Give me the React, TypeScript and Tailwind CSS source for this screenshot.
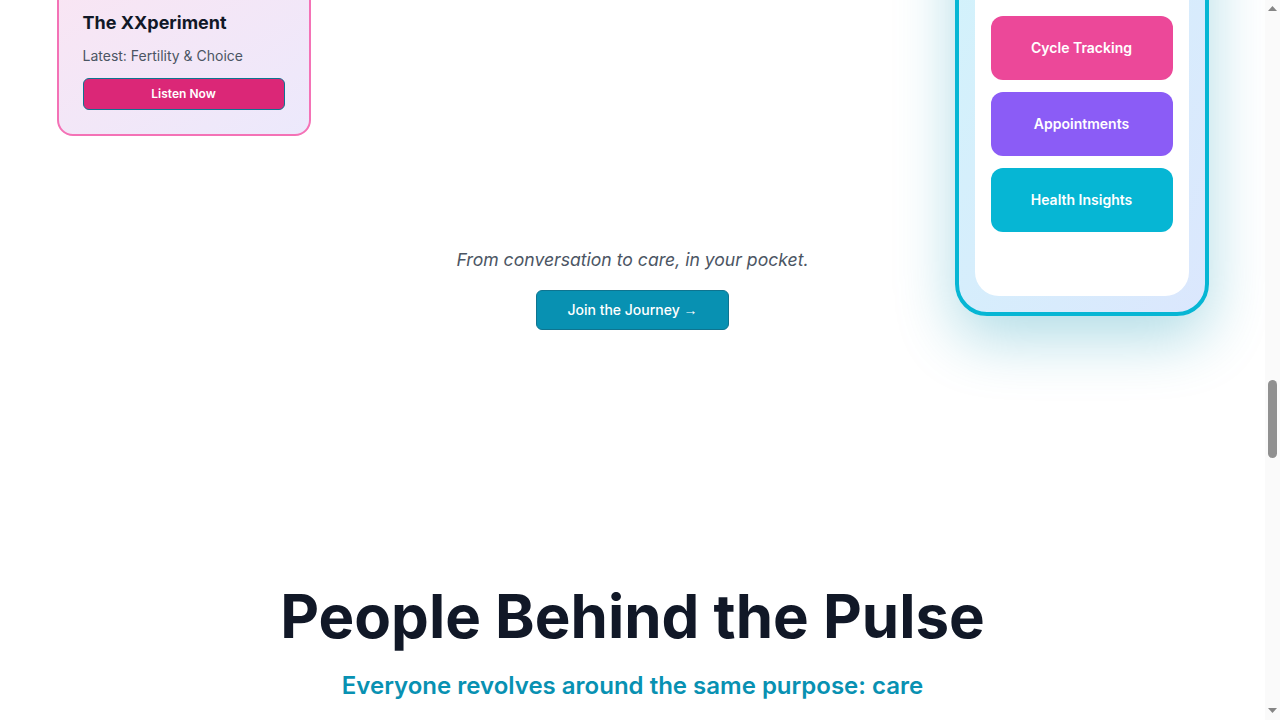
import { useLayoutEffect, useRef, useState } from "react";

const services = [
  { title: "Cycle Care", text: "Personal guidance for every phase of your cycle, from first period to menopause." },
  { title: "Fertility Support", text: "Honest answers, gentle planning tools and clinicians who listen." },
  { title: "Mental Wellbeing", text: "Hormones and mood are connected. Our care treats them together." },
  { title: "Sexual Health", text: "Private, judgement-free consultations and same-week testing." },
  { title: "Pregnancy Journey", text: "Week-by-week check-ins with midwives and doctors on call." },
  { title: "Community", text: "Circles, events and stories from people who have been there." },
];

const team = [
  { name: "Dr. Amara Okafor", role: "Founder & Gynecologist", initials: "AO", tone: "bg-[#ec4899]" },
  { name: "Lena Fischer", role: "Head of Product", initials: "LF", tone: "bg-[#8b5cf6]" },
  { name: "Priya Raman", role: "Lead Midwife", initials: "PR", tone: "bg-[#06b6d4]" },
  { name: "Sofia Marquez", role: "Podcast Host", initials: "SM", tone: "bg-[#db2777]" },
  { name: "Dr. Hana Sato", role: "Endocrinologist", initials: "HS", tone: "bg-[#0891b2]" },
  { name: "Maya Brooks", role: "Community Lead", initials: "MB", tone: "bg-[#7c3aed]" },
];

function PodcastCard() {
  return (
    <div className="w-[254px] shrink-0 rounded-2xl border-2 border-[#f472b6] bg-linear-to-br from-[#f9e5f3] to-[#ece9fc] px-6 pt-[25px] pb-6">
      <h3 className="text-lg leading-7 font-bold text-[#111827]">The XXperiment</h3>
      <p className="mt-[9px] text-sm text-[#4b5563]">Latest: Fertility &amp; Choice</p>
      <button className="mt-3 w-full rounded-md border border-[#0e7490] bg-[#db2777] py-[5px] text-xs leading-5 font-semibold text-white">
        Listen Now
      </button>
    </div>
  );
}

function Phone({ phoneRef }: { phoneRef: React.RefObject<HTMLDivElement | null> }) {
  return (
    <div
      ref={phoneRef}
      className="flex h-[514px] w-[254px] shrink-0 flex-col rounded-[2rem] border-4 border-[#06b6d4] bg-linear-to-br from-[#d1f4fb] to-[#dbe7fd] p-4 shadow-[0_22px_60px_rgba(8,145,178,0.32)]"
    >
      <div className="flex flex-1 flex-col rounded-3xl bg-white px-4 pb-16">
        <div className="flex items-center justify-between pt-4 text-xs font-semibold text-[#111827]">
          <span>9:41</span>
          <span className="h-2 w-6 rounded-full bg-[#111827]" />
        </div>
        <div className="mt-6 text-center">
          <p className="text-lg font-bold text-[#0891b2]">Pulse</p>
          <p className="text-sm text-[#4b5563]">Hi Maya, day 12</p>
        </div>
        <div className="mt-auto flex flex-col gap-3">
          <div className="flex h-16 items-center justify-center rounded-xl bg-[#ec4899] text-sm font-semibold text-white">
            Cycle Tracking
          </div>
          <div className="flex h-16 items-center justify-center rounded-xl bg-[#8b5cf6] text-sm font-semibold text-white">
            Appointments
          </div>
          <div className="flex h-16 items-center justify-center rounded-xl bg-[#06b6d4] text-sm font-semibold text-white">
            Health Insights
          </div>
        </div>
      </div>
    </div>
  );
}

function Scrollbar({ top, height }: { top: number; height: number }) {
  return (
    <aside className="flex h-screen w-[15px] shrink-0 flex-col bg-[#fafafa]">
      <div className="flex h-[15px] justify-center pt-[6px]">
        <svg width="9" height="5" viewBox="0 0 9 5">
          <path d="M4.5 0 9 5H0z" fill="#858585" />
        </svg>
      </div>
      <div className="relative flex-1">
        <div className="absolute left-[3px] w-[9px] rounded-full bg-[#909090]" style={{ top, height }} />
      </div>
      <div className="flex h-[15px] justify-center pt-[3px]">
        <svg width="9" height="5" viewBox="0 0 9 5">
          <path d="M0 0h9L4.5 5z" fill="#858585" />
        </svg>
      </div>
    </aside>
  );
}

export default function App() {
  const scrollerRef = useRef<HTMLDivElement>(null);
  const phoneRef = useRef<HTMLDivElement>(null);
  const [thumb, setThumb] = useState({ top: 0, height: 0 });

  // the shot shows the page part way down, keep the phone where it sits in the picture
  useLayoutEffect(() => {
    const place = () => {
      const el = scrollerRef.current;
      if (!el || !phoneRef.current) return;
      const r = phoneRef.current.getBoundingClientRect();
      el.scrollTop = r.bottom - el.getBoundingClientRect().top + el.scrollTop - 316;
      const track = el.clientHeight - 30;
      const len = Math.max(18, (track * el.clientHeight) / el.scrollHeight);
      const top = ((track - len) * el.scrollTop) / Math.max(1, el.scrollHeight - el.clientHeight);
      setThumb({ top, height: len });
    };
    place();
    const id = requestAnimationFrame(place);
    return () => cancelAnimationFrame(id);
  }, []);

  return (
    <div className="flex h-screen bg-white font-[Inter,sans-serif] text-[#111827]">
      <div ref={scrollerRef} className="min-w-0 flex-1 overflow-y-scroll [scrollbar-width:none]">
        {/* Nav */}
        <header className="border-b border-gray-100">
          <div className="mx-auto flex h-16 max-w-6xl items-center justify-between">
            <span className="text-xl font-bold text-[#0891b2]">Pulse</span>
            <nav className="flex gap-8 text-sm font-medium text-[#4b5563]">
              <a href="#care">Care</a>
              <a href="#podcast">Podcast</a>
              <a href="#app">App</a>
              <a href="#team">Team</a>
            </nav>
          </div>
        </header>

        {/* Hero */}
        <section className="flex min-h-[720px] flex-col items-center justify-center px-6 text-center">
          <h1 className="max-w-4xl text-7xl leading-tight font-bold">Women&apos;s health, finally in sync.</h1>
          <p className="mt-6 max-w-2xl text-xl text-[#4b5563]">
            Care, conversation and community for every stage of life, built around the people who need it.
          </p>
          <button className="mt-10 rounded-md bg-[#0891b2] px-8 py-3 font-medium text-white">Get Started</button>
        </section>

        {/* Mission */}
        <section className="min-h-[640px] bg-[#fdf2f8] py-28">
          <div className="mx-auto grid max-w-6xl grid-cols-2 gap-16">
            <h2 className="text-5xl leading-tight font-bold">Our mission is simple: listen first.</h2>
            <div className="space-y-6 text-lg text-[#4b5563]">
              <p>Too many women are told their pain is normal. We started Pulse to change that, one conversation at a time.</p>
              <p>Our clinicians, hosts and builders share one belief: the best care begins with being heard.</p>
            </div>
          </div>
        </section>

        {/* Services */}
        <section id="care" className="min-h-[1000px] py-28">
          <div className="mx-auto max-w-6xl">
            <h2 className="text-center text-5xl font-bold">What We Offer</h2>
            <div className="mt-16 grid grid-cols-3 gap-8">
              {services.map((s) => (
                <div key={s.title} className="rounded-2xl border border-gray-100 p-8 shadow-sm">
                  <h3 className="text-xl font-semibold">{s.title}</h3>
                  <p className="mt-3 text-[#4b5563]">{s.text}</p>
                </div>
              ))}
            </div>
          </div>
        </section>

        {/* Quote */}
        <section className="flex min-h-[620px] items-center justify-center bg-[#ecfeff] px-6">
          <p className="max-w-3xl text-center text-3xl leading-snug font-medium text-[#0e7490]">
            &ldquo;For the first time, a doctor asked what I thought was going on.&rdquo;
          </p>
        </section>

        {/* Podcast + app */}
        <section id="app" className="pt-28 pb-24">
          <div className="mx-auto flex max-w-6xl items-center justify-between">
            <PodcastCard />
            <div className="flex flex-1 flex-col items-center px-10 text-center">
              <span className="rounded-full bg-[#ecfeff] px-3 py-1 text-sm font-medium text-[#0e7490]">Pulse App</span>
              <h2 className="mt-4 text-5xl leading-none font-bold">Care that travels with you</h2>
              <p className="mt-6 text-lg leading-8 text-[#4b5563]">Track, book and learn in one place.</p>
              <p className="mt-[262px] text-[17.6px] leading-7 text-[#4b5563] italic">From conversation to care, in your pocket.</p>
              <button className="mt-4 rounded-md border border-[#0e7490] bg-[#0891b2] px-[30px] py-[9px] text-sm leading-5 font-medium text-white">
                Join the Journey <span className="font-['Liberation_Sans',sans-serif]">→</span>
              </button>
            </div>
            <Phone phoneRef={phoneRef} />
          </div>
        </section>

        {/* Team */}
        <section id="team" className="pt-40 pb-32">
          <div className="mx-auto max-w-6xl text-center">
            <h2 className="text-6xl leading-none font-bold text-[#111827]">People Behind the Pulse</h2>
            <p className="mt-6 text-2xl font-semibold text-[#0891b2]">Everyone revolves around the same purpose: care</p>
            <div className="mt-16 grid grid-cols-3 gap-8">
              {team.map((m) => (
                <div key={m.name} className="flex h-[380px] flex-col items-center rounded-2xl border border-gray-100 p-8 shadow-sm">
                  <div className={`flex h-28 w-28 items-center justify-center rounded-full text-3xl font-bold text-white ${m.tone}`}>
                    {m.initials}
                  </div>
                  <h3 className="mt-6 text-xl font-semibold">{m.name}</h3>
                  <p className="mt-1 text-[#0891b2]">{m.role}</p>
                </div>
              ))}
            </div>
          </div>
        </section>

        {/* FAQ */}
        <section className="min-h-[400px] bg-[#faf5ff] py-24">
          <div className="mx-auto max-w-3xl">
            <h2 className="text-4xl font-bold">Questions</h2>
            <p className="mt-6 text-lg text-[#4b5563]">Is Pulse available in my area? We are growing city by city.</p>
          </div>
        </section>

        {/* Newsletter */}
        <section className="flex min-h-[500px] flex-col items-center justify-center text-center">
          <h2 className="text-4xl font-bold">Stay in the loop</h2>
          <p className="mt-4 text-lg text-[#4b5563]">New episodes and updates, once a month.</p>
        </section>

        <footer className="min-h-[420px] bg-[#111827] py-16 text-gray-300">
          <div className="mx-auto max-w-6xl">
            <span className="text-xl font-bold text-white">Pulse</span>
            <p className="mt-4 text-sm">© 2024 Pulse Health</p>
          </div>
        </footer>
      </div>
      <Scrollbar top={thumb.top} height={thumb.height} />
    </div>
  );
}
